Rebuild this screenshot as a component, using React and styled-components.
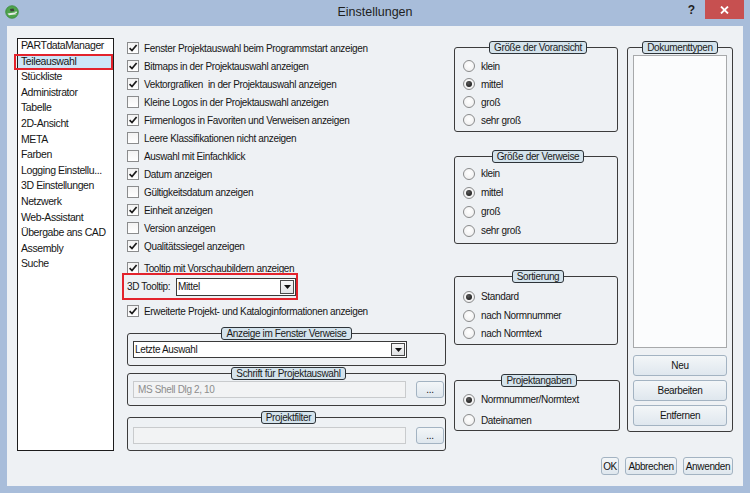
import React from "react";
import styled, { createGlobalStyle } from "styled-components";

const GlobalStyle = createGlobalStyle`
  html, body { margin: 0; padding: 0; background: #a8bdda; }
  body { font-family: "Liberation Sans", Arial, sans-serif; color: #161616; }
  * { box-sizing: border-box; }
`;

const Window = styled.div`
  width: 750px;
  height: 493px;
  background: #a8bdda;
  display: flex;
  flex-direction: column;
  overflow: hidden;
`;

const TitleBar = styled.div`
  height: 26px;
  flex: none;
  display: grid;
  grid-template-columns: 1fr auto 1fr;
  align-items: start;
`;

const TitleLeft = styled.div`
  padding: 5px 0 0 5px;
  display: flex;
`;

const TitleText = styled.div`
  font-size: 12.5px;
  line-height: 24px;
  color: #1e1e1e;
`;

const TitleRight = styled.div`
  display: flex;
  justify-content: flex-end;
  align-items: flex-start;
  padding-right: 6px;
`;

const HelpGlyph = styled.span`
  font-size: 12px;
  font-weight: bold;
  color: #1f1f1f;
  line-height: 20px;
  margin-right: 10px;
`;

const CloseButton = styled.div`
  width: 39px;
  height: 19px;
  background: #c75050;
  display: flex;
  align-items: center;
  justify-content: center;
`;

const Client = styled.div`
  flex: 1;
  margin: 0 7px 7px 7px;
  background: #eef1f4;
  padding: 12px 10px 11px 10px;
  display: flex;
  flex-direction: column;
`;

const MainRow = styled.div`
  height: 413px;
  display: flex;
  align-items: flex-start;
`;

const NavList = styled.div`
  flex: none;
  width: 97px;
  height: 413px;
  background: #ffffff;
  border: 1px solid #1c1c1c;
`;

const NavItem = styled.div`
  position: relative;
  height: 15.6px;
  line-height: 13.6px;
  padding-left: 3px;
  font-size: 10.5px;
  letter-spacing: -0.4px;
  white-space: nowrap;
  background: ${(p) => (p.$selected ? "#cde6f7" : "transparent")};
  &::after {
    content: "";
    display: ${(p) => (p.$selected ? "block" : "none")};
    position: absolute;
    left: -4px;
    right: 0;
    top: -1px;
    bottom: 0;
    border: 2px solid #e3232c;
  }
`;

const MiddleCol = styled.div`
  flex: none;
  width: 319px;
  margin-left: 13px;
  padding-top: 1px;
  display: flex;
  flex-direction: column;
`;

const CheckRow = styled.div`
  height: 18px;
  margin-top: ${(p) => p.$mt || 0}px;
  display: flex;
  align-items: center;
  gap: 5px;
  font-size: 10px;
  letter-spacing: -0.35px;
  white-space: pre;
`;

const BoxMark = styled.span`
  flex: none;
  width: 12px;
  height: 12px;
  border: 1px solid #8b8c8d;
  background: linear-gradient(#f3f3f3, #ffffff);
  display: flex;
  align-items: center;
  justify-content: center;
`;

const HighlightRow = styled.div`
  margin: -4px 0 0 -5px;
  width: 176px;
  height: 27px;
  border: 2px solid #e3232c;
  display: flex;
  align-items: center;
  padding-left: 3px;
  font-size: 10px;
  letter-spacing: -0.35px;
`;

const Combo = styled.div`
  flex: none;
  width: ${(p) => p.$w}px;
  height: ${(p) => p.$h}px;
  margin-left: ${(p) => (p.$push ? "auto" : "0")};
  border: 1px solid #3a3a3a;
  background: #ffffff;
  display: flex;
  align-items: stretch;
  font-size: 10px;
  letter-spacing: -0.35px;
`;

const ComboText = styled.span`
  flex: 1;
  padding-left: 1px;
  display: flex;
  align-items: center;
`;

const ArrowBox = styled.span`
  width: 14px;
  margin: 1px;
  border: 1px solid #4a4a4a;
  background: linear-gradient(#f7f7f7, #e1e3e5);
  display: flex;
  align-items: center;
  justify-content: center;
`;

const Group = styled.fieldset`
  margin: ${(p) => p.$mt || 0}px 0 0 0;
  padding: ${(p) => p.$pad};
  width: ${(p) => p.$w || "100%"};
  border: 1px solid #3c3c3c;
  border-radius: 3px;
  min-width: 0;
`;

const Legend = styled.legend`
  margin: 0 auto;
  padding: 0 4px;
  height: 13px;
  line-height: 11px;
  border: 1px solid #2d3338;
  border-radius: 3px;
  background: #d4e3ec;
  font-size: 10px;
  letter-spacing: -0.35px;
  color: #1b1b1b;
`;

const FieldRow = styled.div`
  display: flex;
  align-items: center;
  gap: 10px;
`;

const DisabledInput = styled.div`
  width: 273px;
  height: 17px;
  border: 1px solid #c9cbcd;
  background: #f2f3f4;
  color: #8d8d8d;
  font-size: 10px;
  letter-spacing: -0.35px;
  display: flex;
  align-items: center;
  padding-left: 4px;
`;

const PushButton = styled.div`
  width: ${(p) => p.$w};
  height: ${(p) => p.$h}px;
  margin-top: ${(p) => p.$mt || 0}px;
  border: 1px solid #a3b3c2;
  border-radius: 3px;
  background: linear-gradient(#f3f6f8, #dfe7ee);
  display: flex;
  align-items: center;
  justify-content: center;
  font-size: 10px;
  letter-spacing: -0.35px;
  color: #141414;
  flex: none;
`;

const RightCol = styled.div`
  flex: none;
  width: 164px;
  margin-left: 8px;
  padding-top: 3px;
  display: flex;
  flex-direction: column;
`;

const RadioRow = styled.div`
  height: ${(p) => p.$h || 18}px;
  display: flex;
  align-items: center;
  gap: 6px;
  font-size: 10px;
  letter-spacing: -0.35px;
`;

const RadioMark = styled.span`
  flex: none;
  width: 12px;
  height: 12px;
  border-radius: 50%;
  border: 1px solid #8a8b8c;
  background: radial-gradient(circle at 50% 40%, #ffffff, #ececec);
  display: flex;
  align-items: center;
  justify-content: center;
  &::after {
    content: "";
    display: ${(p) => (p.$on ? "block" : "none")};
    width: 6px;
    height: 6px;
    border-radius: 50%;
    background: radial-gradient(circle at 40% 35%, #5a5a5a, #0d0d0d);
  }
`;

const DocCol = styled.div`
  flex: none;
  width: 106px;
  margin-left: 9px;
  padding-top: 3px;
  display: flex;
  flex-direction: column;
`;

const DocList = styled.div`
  height: 293px;
  background: #fbfcfd;
  border: 1px solid #a7a9ab;
`;

const ButtonRow = styled.div`
  margin-top: 6px;
  height: 18px;
  display: flex;
  justify-content: flex-end;
  gap: 6px;
`;

const Check = ({ on }) => (
  <BoxMark>
    {on && (
      <svg width="10" height="10" viewBox="0 0 10 10">
        <path d="M1.6 5.2 L4 7.6 L8.6 2" fill="none" stroke="#1a1a1a" strokeWidth="1.7" />
      </svg>
    )}
  </BoxMark>
);

const Arrow = () => (
  <ArrowBox>
    <svg width="7" height="4" viewBox="0 0 7 4">
      <path d="M0 0 H7 L3.5 4 Z" fill="#111" />
    </svg>
  </ArrowBox>
);

const AppIcon = () => (
  <svg width="14" height="14" viewBox="0 0 14 14">
    <circle cx="7" cy="7" r="6.3" fill="#4ea34c" />
    <circle cx="7" cy="7" r="6.3" fill="none" stroke="#3a8a3c" strokeWidth="0.8" />
    <path d="M2.5 8.6 L9.5 7.4 L11.5 9.3 L4 10.3 Z" fill="#e8ece8" />
    <path d="M5 4 L8.5 3.6 L9.3 6 L5.6 6.5 Z" fill="#3c3f3c" />
    <path d="M9.4 6.8 L12 6.4 L12 8 L10.2 8.3 Z" fill="#d9dcd9" />
  </svg>
);

const navItems = [
  "PARTdataManager",
  "Teileauswahl",
  "Stückliste",
  "Administrator",
  "Tabelle",
  "2D-Ansicht",
  "META",
  "Farben",
  "Logging Einstellu...",
  "3D Einstellungen",
  "Netzwerk",
  "Web-Assistant",
  "Übergabe ans CAD",
  "Assembly",
  "Suche",
];

const checks = [
  ["Fenster Projektauswahl beim Programmstart anzeigen", true],
  ["Bitmaps in der Projektauswahl anzeigen", true],
  ["Vektorgrafiken  in der Projektauswahl anzeigen", true],
  ["Kleine Logos in der Projektauswahl anzeigen", false],
  ["Firmenlogos in Favoriten und Verweisen anzeigen", true],
  ["Leere Klassifikationen nicht anzeigen", false],
  ["Auswahl mit Einfachklick", false],
  ["Datum anzeigen", true],
  ["Gültigkeitsdatum anzeigen", false],
  ["Einheit anzeigen", true],
  ["Version anzeigen", false],
  ["Qualitätssiegel anzeigen", true],
];

const RadioGroup = ({ title, items, mt, pad, w }) => (
  <Group $mt={mt} $pad={pad} $w={w}>
    <Legend>{title}</Legend>
    {items.map(([label, on, h]) => (
      <RadioRow key={label} $h={h}>
        <RadioMark $on={on} />
        <span>{label}</span>
      </RadioRow>
    ))}
  </Group>
);

export default function App() {
  return (
    <Window>
      <GlobalStyle />
      <TitleBar>
        <TitleLeft>
          <AppIcon />
        </TitleLeft>
        <TitleText>Einstellungen</TitleText>
        <TitleRight>
          <HelpGlyph>?</HelpGlyph>
          <CloseButton>
            <svg width="9" height="8" viewBox="0 0 9 8">
              <path d="M1 0.5 L8 7.5 M8 0.5 L1 7.5" stroke="#ffffff" strokeWidth="1.8" />
            </svg>
          </CloseButton>
        </TitleRight>
      </TitleBar>
      <Client>
        <MainRow>
          <NavList>
            {navItems.map((n) => (
              <NavItem key={n} $selected={n === "Teileauswahl"}>
                {n}
              </NavItem>
            ))}
          </NavList>

          <MiddleCol>
            {checks.map(([label, on]) => (
              <CheckRow key={label}>
                <Check on={on} />
                <span>{label}</span>
              </CheckRow>
            ))}
            <CheckRow $mt={4}>
              <Check on />
              <span>Tooltip mit Vorschaubildern anzeigen</span>
            </CheckRow>
            <HighlightRow>
              <span>3D Tooltip:</span>
              <Combo $w={120} $h={18} $push>
                <ComboText>Mittel</ComboText>
                <Arrow />
              </Combo>
            </HighlightRow>
            <CheckRow $mt={2}>
              <Check on />
              <span>Erweiterte Projekt- und Kataloginformationen anzeigen</span>
            </CheckRow>

            <Group $mt={7} $pad="1px 5px 7px 5px">
              <Legend>Anzeige im Fenster Verweise</Legend>
              <Combo $w={274} $h={17}>
                <ComboText>Letzte Auswahl</ComboText>
                <Arrow />
              </Combo>
            </Group>

            <Group $mt={1} $pad="1px 1px 7px 5px">
              <Legend>Schrift für Projektauswahl</Legend>
              <FieldRow>
                <DisabledInput>MS Shell Dlg 2, 10</DisabledInput>
                <PushButton $w="28px" $h={17}>...</PushButton>
              </FieldRow>
            </Group>

            <Group $mt={5} $pad="3px 1px 6px 5px">
              <Legend>Projektfilter</Legend>
              <FieldRow>
                <DisabledInput />
                <PushButton $w="28px" $h={17}>...</PushButton>
              </FieldRow>
            </Group>
          </MiddleCol>

          <RightCol>
            <RadioGroup
              title="Größe der Voransicht"
              pad="3px 4px 2px 8px"
              items={[
                ["klein", false],
                ["mittel", true],
                ["groß", false],
                ["sehr groß", false],
              ]}
            />
            <RadioGroup
              title="Größe der Verweise"
              mt={18}
              pad="1px 4px 3px 8px"
              items={[
                ["klein", false, 19],
                ["mittel", true, 19],
                ["groß", false, 19],
                ["sehr groß", false, 19],
              ]}
            />
            <RadioGroup
              title="Sortierung"
              mt={26}
              pad="4px 4px 3px 8px"
              items={[
                ["Standard", true, 19],
                ["nach Normnummer", false, 19],
                ["nach Normtext", false, 16],
              ]}
            />
            <RadioGroup
              title="Projektangaben"
              mt={29}
              w="166px"
              pad="2px 4px 0 8px"
              items={[
                ["Normnummer/Normtext", true, 21],
                ["Dateinamen", false, 20],
              ]}
            />
          </RightCol>

          <DocCol>
            <Group $pad="1px 5px 5px 5px">
              <Legend>Dokumenttypen</Legend>
              <DocList />
              <PushButton $w="100%" $h={21} $mt={7}>Neu</PushButton>
              <PushButton $w="100%" $h={21} $mt={4}>Bearbeiten</PushButton>
              <PushButton $w="100%" $h={21} $mt={4}>Entfernen</PushButton>
            </Group>
          </DocCol>
        </MainRow>
        <ButtonRow>
          <PushButton $w="18px" $h={18}>OK</PushButton>
          <PushButton $w="52px" $h={18}>Abbrechen</PushButton>
          <PushButton $w="50px" $h={18}>Anwenden</PushButton>
        </ButtonRow>
      </Client>
    </Window>
  );
}
